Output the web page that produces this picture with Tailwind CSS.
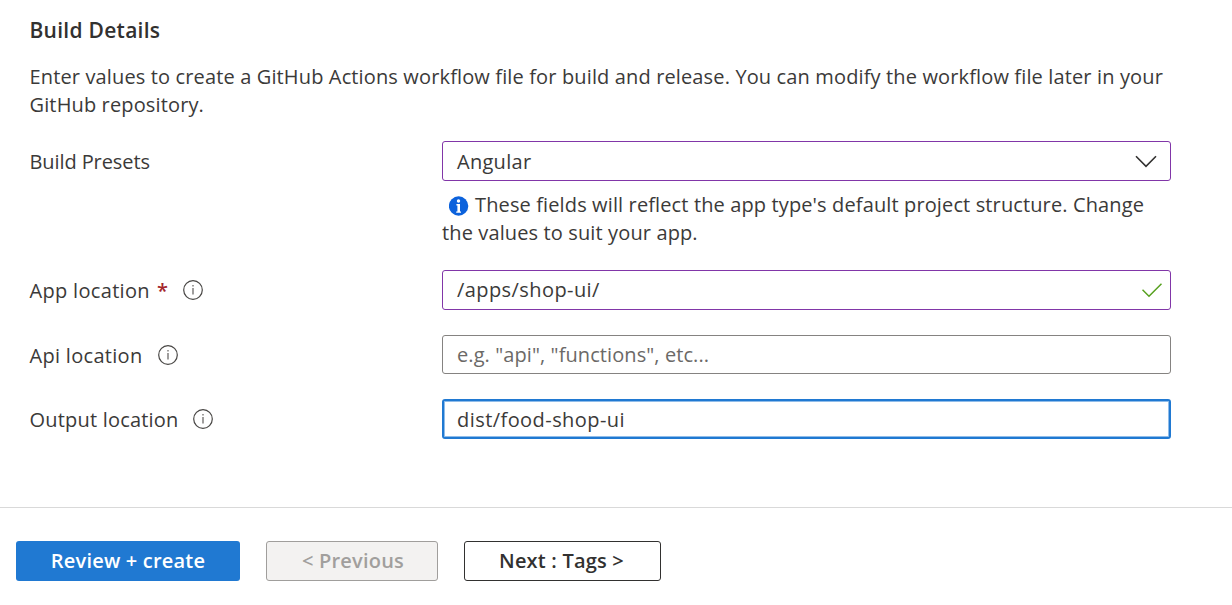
<!DOCTYPE html>
<html lang="en">
<head>
<meta charset="utf-8">
<title>Build Details</title>
<script src="https://cdn.jsdelivr.net/npm/@tailwindcss/browser@4"></script>
</head>
<body class="bg-white font-['Open_Sans','Noto_Sans',sans-serif] text-[20px] leading-7 text-[#3b3a39]">
<main class="h-[508px] border-b border-[#d9d9d9] pl-[29.5px] pt-4">
  <h1 class="text-[21px] font-semibold tracking-[0.27px] text-[#323130]"><span>Build Details</span></h1>
  <p class="mt-[19px] whitespace-nowrap tracking-[0.137px]"><span>Enter values to create a GitHub Actions workflow file for build and release. You can modify the workflow file later in your</span><br><span>GitHub repository.</span></p>

  <div class="mt-[22px] flex">
    <div class="flex h-10 w-[412.5px] items-center pt-0.5 tracking-[-0.09px]"><span>Build Presets</span></div>
    <div class="w-[729px]">
      <div class="flex h-10 items-center justify-between rounded-[3px] border border-[#8136a8] pl-3.5 pr-[12.5px]">
        <span class="mt-px tracking-[0.28px]">Angular</span>
        <svg class="h-6 w-6" viewBox="0 0 24 24" fill="none" stroke="#323130" stroke-width="1.6"><path d="M2 7.3 12 17.4 22 7.3"/></svg>
      </div>
      <p class="mt-2.5 whitespace-nowrap tracking-[0.125px]"><svg class="ml-[7px] mr-1.5 inline-block h-5 w-5 align-[-3.5px]" viewBox="0 0 20 20"><circle cx="9.6" cy="10" r="9.7" fill="#0c62dc"/><circle cx="9.5" cy="5" r="1.7" fill="#fff"/><path d="M7.4 8H11v7.4h1v1.4H7.2v-1.4h1.2v-6h-1z" fill="#fff"/></svg><span>These fields will reflect the app type's default project structure. Change</span><br><span>the values to suit your app.</span></p>
    </div>
  </div>

  <div class="mt-[23px] flex">
    <div class="flex h-10 w-[412.5px] items-center pt-px">
      <span class="tracking-[0.32px]">App location</span><span class="ml-[7px] font-semibold text-[#a4262c]">*</span>
      <svg class="mb-px ml-[15.5px] h-5 w-5" viewBox="0 0 20 20"><circle cx="10" cy="10" r="9.3" fill="none" stroke="#484644" stroke-width="1.2"/><path d="M10 8v6.5M10 5v1.5" stroke="#605e5c" stroke-width="1.2"/></svg>
    </div>
    <div class="flex h-10 w-[729px] items-center justify-between rounded-[3px] border border-[#8136a8] pl-3.5 pr-[8.5px]">
      <span class="tracking-[0.42px]">/apps/shop-ui/</span>
      <svg class="h-5 w-5" viewBox="0 0 20 20" fill="none" stroke="#57a01f" stroke-width="1.5"><path d="M.5 9.8 7 16.3 19.5 3.7"/></svg>
    </div>
  </div>

  <div class="mt-[25px] flex">
    <div class="flex h-[39px] w-[412.5px] items-center pt-0.5">
      <span class="tracking-[0.3px]">Api location</span>
      <svg class="mb-px ml-[15.5px] h-5 w-5" viewBox="0 0 20 20"><circle cx="10" cy="10" r="9.3" fill="none" stroke="#484644" stroke-width="1.2"/><path d="M10 8v6.5M10 5v1.5" stroke="#605e5c" stroke-width="1.2"/></svg>
    </div>
    <div class="flex h-[39px] w-[729px] items-center rounded-[3px] border border-[#858381] pl-3.5 text-[#6b6967]">
      <span class="tracking-[0.09px]">e.g. "api", "functions", etc...</span>
    </div>
  </div>

  <div class="mt-[25px] flex">
    <div class="flex h-10 w-[412.5px] items-center pt-px">
      <span class="tracking-[0.2px]">Output location</span>
      <svg class="mb-px ml-[14.5px] h-5 w-5" viewBox="0 0 20 20"><circle cx="10" cy="10" r="9.3" fill="none" stroke="#484644" stroke-width="1.2"/><path d="M10 8v6.5M10 5v1.5" stroke="#605e5c" stroke-width="1.2"/></svg>
    </div>
    <div class="flex h-10 w-[729px] items-center rounded-[3px] border-2 border-[#2079d2] pl-[13px] shadow-[inset_0_0_0_1px_#8fbce9]">
      <span class="mt-px tracking-[0.44px]">dist/food-shop-ui</span>
    </div>
  </div>
</main>

<footer class="flex pl-4 pt-[33px] font-semibold tracking-[0.2px]">
  <button class="flex h-10 w-56 items-center justify-center rounded-[3px] bg-[#2079d2] text-white"><span>Review + create</span></button>
  <button class="ml-[26px] flex h-10 w-[172px] items-center justify-center rounded-[3px] border border-[#a09e9c] bg-[#f3f2f1] text-[#a19f9d]"><span class="ml-0.5">&lt; Previous</span></button>
  <button class="ml-[26px] flex h-10 w-[197px] items-center justify-center rounded-[3px] border border-[#323130] text-[#323130]"><span class="-ml-0.5">Next : Tags &gt;</span></button>
</footer>
</body>
</html>
